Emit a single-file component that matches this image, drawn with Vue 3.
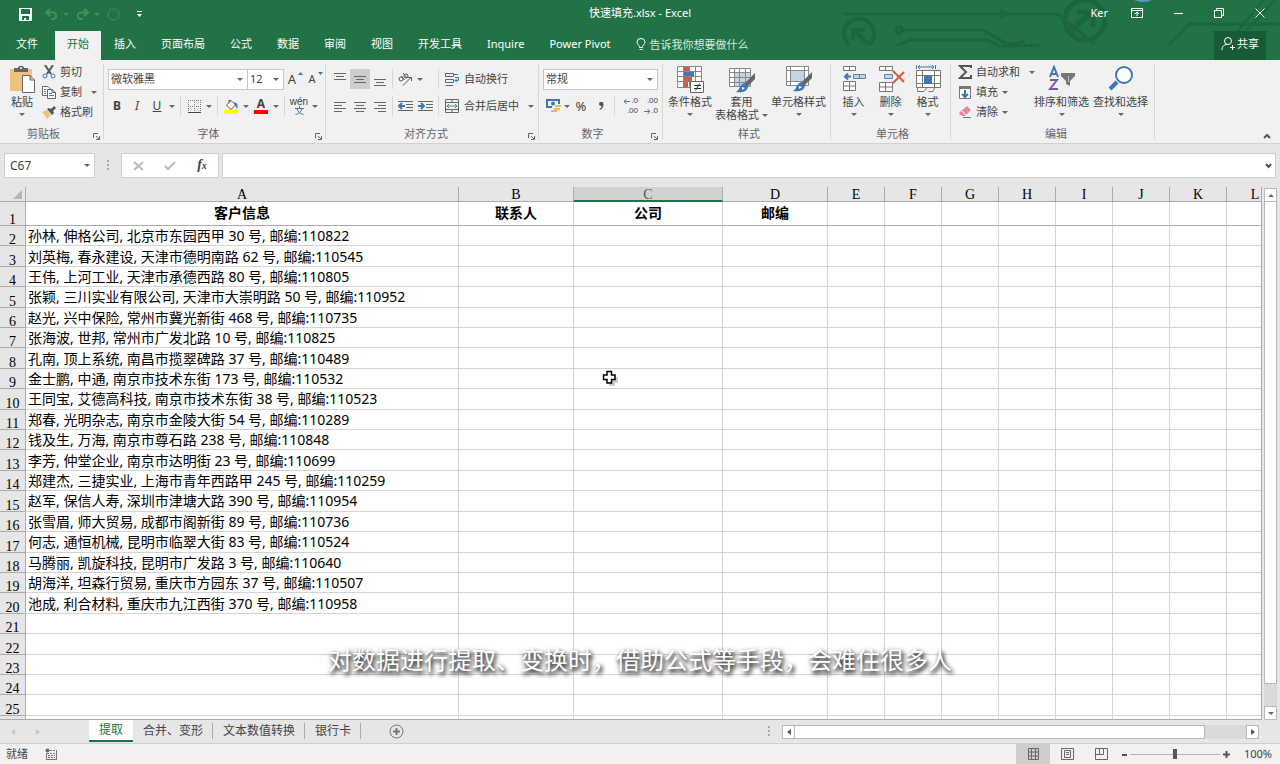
<script setup>
import { ref } from 'vue'

const tabs = ['文件', '开始', '插入', '页面布局', '公式', '数据', '审阅', '视图', '开发工具', 'Inquire', 'Power Pivot']
const columns = ['A', 'B', 'C', 'D', 'E', 'F', 'G', 'H', 'I', 'J', 'K', 'L']
const headings = ['客户信息', '联系人', '公司', '邮编']
const records = [
  '孙林, 伸格公司, 北京市东园西甲 30 号, 邮编:110822',
  '刘英梅, 春永建设, 天津市德明南路 62 号, 邮编:110545',
  '王伟, 上河工业, 天津市承德西路 80 号, 邮编:110805',
  '张颖, 三川实业有限公司, 天津市大崇明路 50 号, 邮编:110952',
  '赵光, 兴中保险, 常州市冀光新街 468 号, 邮编:110735',
  '张海波, 世邦, 常州市广发北路 10 号, 邮编:110825',
  '孔南, 顶上系统, 南昌市揽翠碑路 37 号, 邮编:110489',
  '金士鹏, 中通, 南京市技术东街 173 号, 邮编:110532',
  '王同宝, 艾德高科技, 南京市技术东街 38 号, 邮编:110523',
  '郑春, 光明杂志, 南京市金陵大街 54 号, 邮编:110289',
  '钱及生, 万海, 南京市尊石路 238 号, 邮编:110848',
  '李芳, 仲堂企业, 南京市达明街 23 号, 邮编:110699',
  '郑建杰, 三捷实业, 上海市青年西路甲 245 号, 邮编:110259',
  '赵军, 保信人寿, 深圳市津塘大路 390 号, 邮编:110954',
  '张雪眉, 师大贸易, 成都市阁新街 89 号, 邮编:110736',
  '何志, 通恒机械, 昆明市临翠大街 83 号, 邮编:110524',
  '马腾丽, 凯旋科技, 昆明市广发路 3 号, 邮编:110640',
  '胡海洋, 坦森行贸易, 重庆市方园东 37 号, 邮编:110507',
  '池成, 利合材料, 重庆市九江西街 370 号, 邮编:110958',
]
const rows = Array.from({ length: 24 }, (_, i) => ({ number: i + 2, text: records[i] ?? '' }))
const sheets = ['提取', '合并、变形', '文本数值转换', '银行卡']

const cellName = ref('C67')
const formula = ref('')
const zoom = ref(50)
const activeSheet = ref('提取')

// Line ends of each alignment glyph, as [x1, x2, y].
const vAligns = [
  { name: '顶端对齐', lines: [[1, 13, 1], [3, 11, 4], [1, 13, 7]] },
  { name: '垂直居中', lines: [[1, 13, 4], [3, 11, 7], [1, 13, 10]] },
  { name: '底端对齐', lines: [[1, 13, 7], [3, 11, 10], [1, 13, 13]] },
]
const hAligns = [
  { name: '左对齐', lines: [[1, 13, 2], [1, 9, 5], [1, 13, 8], [1, 9, 11]] },
  { name: '居中', lines: [[1, 13, 2], [3, 11, 5], [1, 13, 8], [3, 11, 11]] },
  { name: '右对齐', lines: [[1, 13, 2], [5, 13, 5], [1, 13, 8], [5, 13, 11]] },
]
</script>

<template>
  <div class="app">
    <header class="top">
      <svg class="circuit" viewBox="0 0 445 60" width="445" height="60" fill="none" stroke="#1a6238" stroke-width="3" aria-hidden="true">
        <path d="M8 14H190L222 14L260 44" />
        <path d="M66 30H148L172 44H178L190 41" />
        <path d="M62 45L76 40H152L165 46H182L205 45" />
        <circle cx="64" cy="30" r="3" />
        <path d="M165 10L172 14L165 18" stroke-width="2" />
        <path d="M14 45A15 15 0 1 1 34 45" stroke-width="4" />
        <path d="M18 40V30H30M19 31L33 44" stroke-width="4" />
        <circle cx="250" cy="20" r="20" stroke-width="5" />
        <path d="M236 30L256 13M242 12H258V27" stroke-width="5" />
        <path d="M334 45L354 24H445" />
        <path d="M402 32L428 0M412 30L440 0" stroke-width="2" />
        <ellipse cx="308" cy="-2" rx="10" ry="4" fill="#5fa8e6" stroke="none" />
      </svg>
      <div class="title-row">
        <div class="quick">
          <button class="qbtn save" aria-label="保存">
            <svg width="13" height="13" viewBox="0 0 13 13"><path fill="#fff" fill-rule="evenodd" d="M0 0H13V13H0ZM2 1V6H11V1ZM3 8V12H5V10H7V12H10V8Z" /></svg>
          </button>
          <button class="qbtn" aria-label="撤消">
            <svg width="13" height="12" viewBox="0 0 13 12" fill="none" stroke="#43905f" stroke-width="2"><path d="M5 1L1 4.5L5 8M1 4.5H8A3 3 0 0 1 8 11H6" /></svg>
          </button>
          <span class="caret faint"></span>
          <button class="qbtn" aria-label="恢复">
            <svg width="13" height="12" viewBox="0 0 13 12" fill="none" stroke="#43905f" stroke-width="2"><path d="M8 1L12 4.5L8 8M12 4.5H5A3 3 0 0 0 5 11H7" /></svg>
          </button>
          <span class="caret faint"></span>
          <button class="qbtn" aria-label="触摸模式">
            <svg width="13" height="13" viewBox="0 0 13 13" fill="none" stroke="#43905f"><circle cx="6.500" cy="6.500" r="5.500" /></svg>
          </button>
          <button class="qbtn" aria-label="自定义快速访问工具栏">
            <svg width="7" height="8" viewBox="0 0 7 8"><path fill="#fff" d="M1 1H6V2H1ZM1 4H6L3.500 7Z" /></svg>
          </button>
        </div>
        <h1>快速填充.xlsx - Excel</h1>
        <div class="window">
          <span class="user">Ker</span>
          <button aria-label="功能区显示选项"><svg width="12" height="10" viewBox="0 0 12 10" fill="none" stroke="#fff"><path d="M.5.5H11.500V9.500H.5ZM.5 2.500H11.500M6 8V4M4 6L6 4L8 6" /></svg></button>
          <button aria-label="最小化"><svg width="10" height="10" viewBox="0 0 10 10" stroke="#fff"><path d="M1 5.500H10" /></svg></button>
          <button aria-label="还原"><svg width="10" height="10" viewBox="0 0 10 10" fill="none" stroke="#fff"><path d="M.5 2.500H7.500V9.500H.5ZM2.500 2V.5H9.500V7.500H8" /></svg></button>
          <button aria-label="关闭"><svg width="10" height="10" viewBox="0 0 10 10" stroke="#fff"><path d="M.5.5L9.500 9.500M9.500.5L.5 9.500" /></svg></button>
        </div>
      </div>
      <nav class="tabs">
        <button v-for="t in tabs" :key="t" :class="{ active: t === '开始', file: t === '文件' }">{{ t }}</button>
        <button class="tell">
          <svg width="10" height="13" viewBox="0 0 10 13" fill="none" stroke="#fff"><path d="M3.500 9.500V8.500C3 7 1 6 1 4A4 3.500 0 0 1 9 4C9 6 7 7 6.500 8.500V9.500ZM3.500 11.500H6.500" /></svg>
          告诉我你想要做什么
        </button>
        <button class="share">
          <svg width="14" height="15" viewBox="0 0 14 15" fill="none" stroke="#fff"><circle cx="7" cy="5" r="3.500" /><path d="M1 14C1 10 3.500 8.500 6 8.500M9 11.500H14M11.500 9V14" /></svg>
          共享
        </button>
      </nav>
    </header>

    <section class="ribbon">
      <div class="group clipboard">
        <div class="body">
          <button class="big paste">
            <svg width="28" height="28" viewBox="0 0 28 28"><path fill="#ecc37e" d="M2 4H24V26H2Z" /><path fill="#666" d="M6 3H10C10 0 16 0 16 3H20V7H6Z" /><circle cx="13" cy="3" r="1" fill="#fff" /><path fill="#fff" stroke="#666" d="M14.500 10.500H22L26.500 15V27.500H14.500ZM22 10.500V15H26.500" /></svg>
            <span>粘贴</span><span class="caret"></span>
          </button>
          <div class="stack">
            <button class="small">
              <svg width="14" height="14" viewBox="0 0 14 14" fill="none"><path stroke="#555" stroke-width="2" d="M3 0L9 9M11 0L5 9" /><circle cx="3" cy="11" r="2" stroke="#3f77b8" /><circle cx="11" cy="11" r="2" stroke="#3f77b8" /></svg>剪切
            </button>
            <button class="small">
              <svg width="14" height="14" viewBox="0 0 14 14" fill="#fff" stroke="#666"><path d="M.5 1.500H6L8.500 4V10.500H.5Z" /><path d="M5.500 4.500H10L13.500 7.500V13.500H5.500ZM10 4.500V7.500H13.500" /><path stroke="#4b7cac" d="M2 4.500H4M2 6.500H4M2 8.500H4M7 8.500H10M7 10.500H12" /></svg>复制<span class="caret push"></span>
            </button>
            <button class="small">
              <svg width="14" height="14" viewBox="0 0 14 14"><path fill="#ecc37e" d="M0 7L5 5L9 10L5 14Z" /><path fill="#555" d="M5 4L7 3L9 4L12 1L14 3L11 6L12 8L10 10Z" /></svg>格式刷
            </button>
          </div>
        </div>
        <footer class="has-launch">剪贴板<button class="launch" aria-label="剪贴板选项"><svg width="7" height="7" viewBox="0 0 7 7" fill="none" stroke="#666"><path d="M.5 5V.5H5M3 3L6 6M6.500 3V6.500H3" /></svg></button></footer>
      </div>

      <div class="group font">
        <div class="body rows">
          <div class="line">
            <label class="combo family"><select aria-label="字体"><option>微软雅黑</option></select><span class="caret"></span></label>
            <label class="combo size"><select aria-label="字号"><option>12</option></select><span class="caret"></span></label>
            <button class="tool letter">A<svg class="tri" width="5" height="3" viewBox="0 0 5 3"><path fill="#3f77b8" d="M0 3L2.500 0L5 3Z" /></svg></button>
            <button class="tool letter less">A<svg class="tri" width="5" height="3" viewBox="0 0 5 3"><path fill="#3f77b8" d="M0 0H5L2.500 3Z" /></svg></button>
          </div>
          <div class="line format">
            <button class="tool"><b>B</b></button>
            <button class="tool"><i>I</i></button>
            <button class="tool"><u>U</u></button>
            <button class="drop" aria-label="下划线类型"><span class="caret"></span></button>
            <span class="sep"></span>
            <button class="tool" aria-label="边框"><svg width="13" height="13" viewBox="0 0 13 13" fill="none" stroke="#777"><path stroke-dasharray="1 1" d="M0 .5H13M.5 0V12M12.500 0V12M6.500 0V12M0 6.500H13" /><path stroke="#444" d="M0 12.500H13" /></svg></button>
            <button class="drop" aria-label="更多边框"><span class="caret"></span></button>
            <span class="sep"></span>
            <button class="tool" aria-label="填充颜色"><svg width="15" height="15" viewBox="0 0 15 15"><path fill="#fff" stroke="#555" d="M2.500 6L7 1.500L11.500 6L7 10.500ZM5 4V1.500H7" /><path fill="#3f77b8" d="M10 3C14 4 14 7 13 10L11 6Z" /><path fill="#ff0" d="M0 11H14V15H0Z" /></svg></button>
            <button class="drop" aria-label="更多填充颜色"><span class="caret"></span></button>
            <button class="tool color" aria-label="字体颜色">A</button>
            <button class="drop" aria-label="更多字体颜色"><span class="caret"></span></button>
            <span class="sep"></span>
            <button class="tool pinyin"><span>wén</span><svg width="9" height="9" viewBox="0 0 9 9" fill="none" stroke="#3f77b8"><path d="M4.500 0V2M0 2.500H9M2 3C3 6 5 7.500 8.500 8.500M7 3C6 6 4 7.500.5 8.500" /></svg></button>
            <button class="drop" aria-label="拼音选项"><span class="caret"></span></button>
          </div>
        </div>
        <footer class="has-launch">字体<button class="launch" aria-label="字体选项"><svg width="7" height="7" viewBox="0 0 7 7" fill="none" stroke="#666"><path d="M.5 5V.5H5M3 3L6 6M6.500 3V6.500H3" /></svg></button></footer>
      </div>

      <div class="group align">
        <div class="body rows">
          <div class="line">
            <button v-for="(a, i) in vAligns" :key="a.name" class="tool" :class="{ on: i === 1 }" :aria-label="a.name">
              <svg width="14" height="15" viewBox="0 0 14 15" fill="#666"><rect v-for="l in a.lines" :key="l[2]" :x="l[0]" :y="l[2]" :width="l[1] - l[0]" height="1" /></svg>
            </button>
            <span class="sep"></span>
            <button class="tool" aria-label="方向"><svg width="16" height="16" viewBox="0 0 16 16" fill="none" stroke="#555"><circle cx="4" cy="8" r="2" /><path d="M4.500 5L7.500 9M6 2L10 7" /><circle cx="9" cy="5" r="2" /><path d="M6 14.500L14 6.500M11 6.500H14.500V10" /></svg></button>
            <button class="drop" aria-label="更多方向"><span class="caret"></span></button>
            <span class="sep wide"></span>
            <button class="small">
              <svg width="15" height="15" viewBox="0 0 15 15" fill="none" stroke="#666"><path d="M.5 1.500H8.500V4.500H.5ZM.5 7.500H8.500V10.500H.5ZM.5 13.500H8" /><path stroke="#3f77b8" d="M9 2.500H13M10 5.500H13.500V8.500H10M12 6.500L10 8.500L12 10.500" /></svg>自动换行
            </button>
          </div>
          <div class="line">
            <button v-for="a in hAligns" :key="a.name" class="tool" :aria-label="a.name">
              <svg width="14" height="13" viewBox="0 0 14 13" fill="#666"><rect v-for="l in a.lines" :key="l[2]" :x="l[0]" :y="l[2]" :width="l[1] - l[0]" height="1" /></svg>
            </button>
            <span class="sep"></span>
            <button class="tool" aria-label="减少缩进量"><svg width="15" height="13" viewBox="0 0 15 13" fill="none" stroke="#666"><path d="M0 1.500H15M8 4.500H15M8 7.500H15M0 10.500H15" /><path stroke="#3f77b8" stroke-width="2" d="M1 6H7M4 3L1 6L4 9" /></svg></button>
            <button class="tool" aria-label="增加缩进量"><svg width="15" height="13" viewBox="0 0 15 13" fill="none" stroke="#666"><path d="M0 1.500H15M8 4.500H15M8 7.500H15M0 10.500H15" /><path stroke="#3f77b8" stroke-width="2" d="M0 6H6M3 3L6 6L3 9" /></svg></button>
            <span class="sep merge-sep"></span>
            <button class="small merge">
              <svg width="15" height="14" viewBox="0 0 15 14" fill="none" stroke="#666"><path d="M.5.5H13.500V13.500H.5ZM.5 3.500H13.500M.5 10.500H13.500M7 .5V3.500M7 10.500V13.500" /><path stroke="#4b8a7a" d="M2 7H12M4 5L2 7L4 9M10 5L12 7L10 9" /></svg>合并后居中<span class="caret push"></span>
            </button>
          </div>
        </div>
        <footer class="has-launch">对齐方式<button class="launch" aria-label="对齐选项"><svg width="7" height="7" viewBox="0 0 7 7" fill="none" stroke="#666"><path d="M.5 5V.5H5M3 3L6 6M6.500 3V6.500H3" /></svg></button></footer>
      </div>

      <div class="group number">
        <div class="body rows">
          <div class="line">
            <label class="combo grow"><select aria-label="数字格式"><option>常规</option></select><span class="caret"></span></label>
          </div>
          <div class="line">
            <button class="tool" aria-label="会计数字格式"><svg width="15" height="14" viewBox="0 0 15 14" fill="none"><path stroke="#3f77b8" stroke-width="2" d="M6 8H1V1H13V5" /><circle cx="7" cy="4.500" r="2" fill="#3f77b8" /><path fill="#edb763" d="M9 6H15V8H9ZM8 9H14V11H8ZM5 11H11V13H5Z" /></svg></button>
            <button class="drop" aria-label="更多货币格式"><span class="caret"></span></button>
            <button class="tool pct">%</button>
            <button class="tool comma" aria-label="千位分隔样式"><svg width="5" height="9" viewBox="0 0 5 9"><path fill="#555" d="M0 2A2.200 2.200 0 0 1 4.500 2C4.500 5 3 7 1 8L.5 7C2 6 2.500 5 2.500 4C1 4 0 3 0 2Z" /></svg></button>
            <span class="sep"></span>
            <button class="tool decimal" aria-label="增加小数位数"><span><svg width="6" height="5" viewBox="0 0 6 5" fill="none" stroke="#3f77b8"><path d="M0 2.500H6M2.500 0L0 2.500L2.500 5" /></svg>.0</span><span>.00</span></button>
            <button class="tool decimal" aria-label="减少小数位数"><span>.00</span><span><svg width="6" height="5" viewBox="0 0 6 5" fill="none" stroke="#3f77b8"><path d="M0 2.500H6M3.500 0L6 2.500L3.500 5" /></svg>.0</span></button>
          </div>
        </div>
        <footer class="has-launch">数字<button class="launch" aria-label="数字选项"><svg width="7" height="7" viewBox="0 0 7 7" fill="none" stroke="#666"><path d="M.5 5V.5H5M3 3L6 6M6.500 3V6.500H3" /></svg></button></footer>
      </div>

      <div class="group styles">
        <div class="body">
          <button class="big">
            <svg width="28" height="28" viewBox="0 0 28 28"><path fill="#fff" stroke="#888" d="M1.500 1.500H25.500V22.500H1.500ZM1.500 6.500H25.500M1.500 11.500H25.500M1.500 16.500H25.500M7.500 1.500V22.500M13.500 1.500V22.500M19.500 1.500V22.500" /><path fill="#d65a3c" d="M8 2H13V6H8ZM8 12H16V16H8ZM8 17H12V22H8Z" /><path fill="#3f77b8" d="M8 7H18V11H8Z" /><path fill="#fff" stroke="#666" d="M14.500 16.500H27.500V27.500H14.500Z" /><path stroke="#333" fill="none" d="M18 20.500H25M18 23.500H25M23.500 18.500L19.500 25.500" /></svg>
            <span>条件格式</span><span class="caret"></span>
          </button>
          <button class="big two">
            <svg width="28" height="28" viewBox="0 0 28 28"><path fill="#fff" stroke="#888" d="M1.500 3.500H22.500V21.500H1.500Z" /><path fill="#c5d3e4" d="M7 8H22V21H7Z" /><path stroke="#888" fill="none" d="M1.500 7.500H22.500M1.500 12.500H22.500M1.500 17.500H22.500M6.500 3.500V21.500M11.500 3.500V21.500M17.500 3.500V21.500" /><path fill="#666" d="M27 8V14L19 22L16 19Z" /><path fill="#3f77b8" d="M16 18L20 22C19 27 13 28 8 27C12 25 11 20 16 18Z" /><path fill="#fff" d="M14 22L17 23L14 25Z" /></svg>
            <span>套用</span><span class="inline">表格格式<i class="caret"></i></span>
          </button>
          <button class="big">
            <svg width="28" height="28" viewBox="0 0 28 28"><path fill="#fff" stroke="#888" d="M1.500 1.500H23.500V20.500H1.500ZM1.500 5.500H23.500M1.500 16.500H23.500M5.500 1.500V20.500M19.500 1.500V20.500" /><path fill="#c5d3e4" d="M6 6H19V16H6Z" /><path fill="#666" d="M27 7V13L19 21L16 18Z" /><path fill="#3f77b8" d="M16 17L20 21C19 26 13 27 8 26C12 24 11 19 16 17Z" /><path fill="#fff" d="M14 21L17 22L14 24Z" /></svg>
            <span>单元格样式</span><span class="caret"></span>
          </button>
        </div>
        <footer>样式</footer>
      </div>

      <div class="group cells">
        <div class="body">
          <button class="big">
            <svg width="28" height="28" viewBox="0 0 28 28" stroke="#777" fill="#fff"><path d="M3.500 1.500H15.500V5.500H3.500ZM9.500 1.500V5.500" /><path fill="#c5d3e4" stroke="#5a82ad" d="M13.500 9.500H25.500V13.500H13.500ZM19.500 9.500V13.500" /><path d="M3.500 16.500H15.500V25.500H3.500ZM9.500 16.500V25.500M3.500 21H15.500" /><path fill="none" stroke="#3f77b8" stroke-width="2" d="M5 11.500H11M8 8.500L5 11.500L8 14.500" /></svg>
            <span>插入</span><span class="caret"></span>
          </button>
          <button class="big">
            <svg width="28" height="28" viewBox="0 0 28 28" stroke="#777" fill="#fff"><path d="M2.500 1.500H15.500V5.500H2.500ZM8.500 1.500V5.500" /><path fill="#c5d3e4" stroke="#5a82ad" d="M7.500 9.500H15.500V13.500H7.500Z" /><path d="M2.500 17.500H15.500V26.500H2.500ZM8.500 17.500V26.500M2.500 22H15.500" /><path fill="none" stroke="#d65a3c" stroke-width="2" d="M16 6L27 17M27 7L16 18" /></svg>
            <span>删除</span><span class="caret"></span>
          </button>
          <button class="big">
            <svg width="28" height="28" viewBox="0 0 28 28" stroke="#777" fill="#fff"><path d="M2.500 5.500H26.500V22.500H2.500ZM8.500 5.500V22.500M20.500 5.500V22.500M2.500 10.500H26.500M2.500 18.500H26.500M3.500 22.500V26.500H10L12.500 23M14.500 26.500H19L20.500 23" /><path fill="#3f77b8" stroke="none" d="M10 11H18V19H10Z" /><path fill="none" stroke="#3f77b8" d="M2.500 0V4M21.500 0V4M4 2H20M6 0L4 2L6 4M18 0L20 2L18 4" /></svg>
            <span>格式</span><span class="caret"></span>
          </button>
        </div>
        <footer>单元格</footer>
      </div>

      <div class="group edit">
        <div class="body">
          <div class="stack">
            <button class="small"><svg width="14" height="14" viewBox="0 0 14 14" fill="none" stroke="#555" stroke-width="2"><path d="M13 3V1H2L8 7L2 13H13V10" /></svg>自动求和<span class="caret push"></span></button>
            <button class="small"><svg width="14" height="14" viewBox="0 0 14 14"><path fill="#fff" stroke="#777" d="M1.500 1.500H12.500V13.500H1.500Z" /><path fill="#777" d="M1 1H13V4H1Z" /><path fill="none" stroke="#3f77b8" stroke-width="2" d="M7 5V12M4 9L7 12L10 9" /></svg>填充<span class="caret near"></span></button>
            <button class="small"><svg width="14" height="14" viewBox="0 0 14 14"><path fill="#e487a5" d="M2 7L9 1L13 5L7 11H4L1 9Z" /><path stroke="#fff" d="M4 6L8 10" /><path stroke="#777" d="M5 12.500H13" /></svg>清除<span class="caret near"></span></button>
          </div>
          <button class="big">
            <svg width="28" height="28" viewBox="0 0 28 28" fill="none"><path stroke="#3f77b8" stroke-width="2" d="M2 12L6 2L10 12M3 9H9" /><path stroke="#8a4fb0" stroke-width="2" d="M2 15H9L2 24H10" /><path fill="#777" d="M13 8H27V11L22 16V21L18 19V16L13 11Z" /><path stroke="#bbb" d="M20.500 11V17" /></svg>
            <span>排序和筛选</span><span class="caret"></span>
          </button>
          <button class="big">
            <svg width="28" height="28" viewBox="0 0 28 28" fill="none" stroke="#3f77b8"><path stroke-width="4" d="M3 24L10 17" /><circle cx="17" cy="10" r="8" stroke-width="2" fill="#fff" /></svg>
            <span>查找和选择</span><span class="caret"></span>
          </button>
        </div>
        <footer>编辑</footer>
      </div>
      <button class="collapse" aria-label="折叠功能区"><svg width="8" height="6" viewBox="0 0 8 6" fill="none" stroke="#555" stroke-width="2"><path d="M1 5L4 2L7 5" /></svg></button>
    </section>

    <section class="formula">
      <div class="namebox"><input v-model="cellName" aria-label="名称框"><span class="caret"></span></div>
      <span class="dots"></span>
      <div class="fxbox">
        <button aria-label="取消"><svg width="11" height="10" viewBox="0 0 11 10" stroke="#bbb" stroke-width="2"><path d="M1 1L10 9M10 1L1 9" /></svg></button>
        <button aria-label="输入"><svg width="12" height="10" viewBox="0 0 12 10" fill="none" stroke="#bbb" stroke-width="2"><path d="M1 5L4 8L11 1" /></svg></button>
        <button class="fx"><i>f<small>x</small></i></button>
      </div>
      <div class="entry"><input v-model="formula" aria-label="编辑栏"><svg width="7" height="6" viewBox="0 0 7 6" fill="none" stroke="#555" stroke-width="2"><path d="M1 1L3.500 4L6 1" /></svg></div>
    </section>

    <main class="work">
      <div class="sheet">
        <table>
          <colgroup><col class="c-num"><col class="c-a"><col class="c-b"><col class="c-c"><col class="c-d"><col v-for="n in 8" :key="n" class="c-x"></colgroup>
          <thead>
            <tr>
              <td class="corner"><svg width="9" height="9" viewBox="0 0 9 9"><path fill="#b4b4b4" d="M9 0V9H0Z" /></svg></td>
              <th v-for="c in columns" :key="c" scope="col" :class="{ current: c === 'C' }">{{ c }}</th>
            </tr>
          </thead>
          <tbody>
            <tr class="first">
              <th scope="row">1</th>
              <td v-for="(c, i) in columns" :key="c">{{ headings[i] }}</td>
            </tr>
            <tr v-for="r in rows" :key="r.number" class="data">
              <th scope="row">{{ r.number }}</th>
              <td v-for="(c, i) in columns" :key="c">{{ i === 0 ? r.text : '' }}</td>
            </tr>
            <tr class="rest"><th></th><td v-for="c in columns" :key="c"></td></tr>
          </tbody>
        </table>
        <svg class="pointer" width="18" height="18" viewBox="0 0 18 18"><path fill="#999" opacity=".5" d="M7 4H12V7H16V13H13V16H7V12H4V7H7Z" /><path fill="#fff" stroke="#000" stroke-width="1.500" d="M5 1.500H9.500V5H13V9.500H9.500V13H5V9.500H1.500V5H5Z" /></svg>
      </div>
      <div class="vscroll">
        <button aria-label="向上滚动"><span class="caret up"></span></button>
        <div class="thumb"></div>
        <div class="track"></div>
        <button aria-label="向下滚动"><span class="caret"></span></button>
      </div>
    </main>

    <section class="sheetbar">
      <button class="arrow" aria-label="上一个工作表"><svg width="4" height="6" viewBox="0 0 4 6"><path fill="#c4c4c4" d="M4 0V6L0 3Z" /></svg></button>
      <button class="arrow" aria-label="下一个工作表"><svg width="4" height="6" viewBox="0 0 4 6"><path fill="#c4c4c4" d="M0 0V6L4 3Z" /></svg></button>
      <div class="sheets">
        <button v-for="s in sheets" :key="s" :class="{ active: s === activeSheet }" @click="activeSheet = s">{{ s }}</button>
      </div>
      <button class="add" aria-label="新工作表"><svg width="15" height="15" viewBox="0 0 15 15" fill="none" stroke="#777"><circle cx="7.500" cy="7.500" r="6.500" /><path stroke-width="2" d="M4 7.500H11M7.500 4V11" /></svg></button>
      <span class="dots"></span>
      <div class="hscroll">
        <button aria-label="向左滚动"><svg width="4" height="6" viewBox="0 0 4 6"><path fill="#555" d="M4 0V6L0 3Z" /></svg></button>
        <div class="thumb"></div>
        <div class="track"></div>
        <button aria-label="向右滚动"><svg width="4" height="6" viewBox="0 0 4 6"><path fill="#555" d="M0 0V6L4 3Z" /></svg></button>
      </div>
    </section>

    <footer class="status">
      <span>就绪</span>
      <button class="macro" aria-label="录制宏"><svg width="12" height="12" viewBox="0 0 12 12" fill="none" stroke="#777"><path d="M5 2.500H11.500V11.500H1.500V5M2 5.500H11M3 7.500H10M3 9.500H10" stroke-dasharray="2 1" /><path d="M11.500 2V11.500H1.500V5" /><circle cx="2.500" cy="2.500" r="2" fill="#666" stroke="none" /></svg></button>
      <div class="views">
        <button class="on" aria-label="普通"><svg width="13" height="12" viewBox="0 0 13 12" fill="none" stroke="#666"><path d="M1.500.5H11.500V11.500H1.500ZM1.500 4H11.500M1.500 8H11.500M4.500.5V11.500M8.500.5V11.500" /></svg></button>
        <button aria-label="页面布局"><svg width="13" height="12" viewBox="0 0 13 12" fill="none" stroke="#666"><path d="M.5.5H12.500V11.500H.5ZM3.500 2.500H9.500V9.500H3.500ZM5 4.500H8M5 6.500H8" /></svg></button>
        <button aria-label="分页预览"><svg width="13" height="12" viewBox="0 0 13 12" fill="none" stroke="#666"><path d="M.5.5H12.500V11.500H.5ZM4.500.5V6.500M8.500.5V6.500H.5" /></svg></button>
      </div>
      <button class="sign" aria-label="缩小"><svg width="7" height="7" viewBox="0 0 7 7" stroke="#555" stroke-width="2"><path d="M1 4H6" /></svg></button>
      <input v-model="zoom" type="range" min="0" max="100" aria-label="缩放">
      <button class="sign" aria-label="放大"><svg width="7" height="7" viewBox="0 0 7 7" stroke="#555" stroke-width="2"><path d="M0 3.500H7M3.500 0V7" /></svg></button>
      <span class="percent">100%</span>
    </footer>

    <p class="caption">对数据进行提取、变换时，借助公式等手段，会难住很多人</p>
  </div>
</template>

<style>
html, body { margin: 0; height: 100%; }
</style>

<style scoped>
.app { position: relative; display: flex; flex-direction: column; height: 100vh; min-height: 480px; overflow: hidden; background: #e6e6e6; color: #444; font: 11px/16px "Noto Sans", "Noto Sans CJK SC", sans-serif; }
.app * { box-sizing: border-box; }
button { display: flex; align-items: center; justify-content: center; margin: 0; padding: 0; border: 0; background: none; color: inherit; font: inherit; white-space: nowrap; }
input, select { margin: 0; border: 0; outline: 0; background: none; color: inherit; font: inherit; }
svg { display: block; flex: none; }
.caret { flex: none; width: 0; height: 0; border: 3px solid transparent; border-top-color: #666; border-bottom: 0; }
.caret.up { border-top: 0; border-bottom: 3px solid #666; }
.caret.faint { border-top-color: #43905f; }

.top { position: relative; flex: none; background: #217346; color: #fff; }
.circuit { position: absolute; top: 0; right: 0; opacity: .75; }
.title-row { position: relative; display: grid; grid-template-columns: 1fr auto 1fr; align-items: center; height: 26px; }
.quick { display: flex; align-items: center; padding-left: 14px; }
.qbtn { width: 22px; height: 24px; padding-top: 2px; }
.save { margin-right: 4px; }
.quick .caret { margin: 2px 2px 0 1px; }
.quick .qbtn:last-child { margin-left: 4px; }
h1 { margin: 0; font-size: 11px; font-weight: 400; line-height: 16px; }
.window { display: flex; justify-content: flex-end; align-items: center; }
.window button { width: 41px; height: 26px; }
.user { padding: 0 8px; }
.tabs { position: relative; display: flex; gap: 1px; height: 34px; padding-top: 5px; }
.tabs button { padding: 0 12px 4px; }
.tabs .file { padding: 0 16px 4px; }
.tabs .active { background: #f1f1f1; color: #217346; }
.tabs .tell { gap: 4px; padding: 0 10px 2px 12px; color: #d8eadf; }
.tabs .share { gap: 2px; margin-left: auto; margin-right: 14px; width: 52px; padding: 0 0 4px; background: #185c37; }

.ribbon { display: flex; flex: none; height: 84px; padding-top: 2px; background: #f1f1f1; border-bottom: 1px solid #d2d2d2; }
.group { display: flex; flex-direction: column; flex: none; margin: 2px 0 4px; border-right: 1px solid #d6d6d6; }
.body { display: flex; flex: 1; }
.group footer { position: relative; height: 16px; line-height: 22px; text-align: center; color: #666; }
.group .has-launch { padding-right: 16px; }
.launch { position: absolute; right: 3px; bottom: -2px; width: 8px; height: 10px; }
.number .launch { right: 0; }
.stack { display: flex; flex-direction: column; margin-top: -2px; }
.small { gap: 4px; height: 20px; justify-content: flex-start; }
.small .push { margin-left: 5px; }
.small .near { margin-left: 0; }
.big { flex-direction: column; justify-content: flex-start; line-height: 14px; padding-top: 1px; }
.big span:not(.caret) { height: 14px; margin-top: 2px; }
.big > .caret { margin-top: 4px; }
.big.two span:not(.caret) + .inline { margin-top: -1px; }
.inline { display: flex; align-items: center; gap: 3px; }
.clipboard { width: 104px; }
.clipboard .paste { width: 42px; padding-left: 2px; }
.rows { flex-direction: column; gap: 7px; padding-top: 5px; }
.line { display: flex; align-items: center; height: 20px; }
.font { width: 222px; padding-left: 4px; }
.combo { position: relative; display: flex; align-items: center; height: 21px; border: 1px solid #c6c6c6; background: #fff; }
.combo select { width: 100%; height: 19px; padding: 0 2px; appearance: none; }
.combo .caret { position: absolute; right: 4px; pointer-events: none; }
.family { width: 140px; }
.size { width: 36px; border-left: 0; }
.grow { flex: 1; }
.tool { position: relative; flex: none; width: 20px; height: 20px; font-size: 12px; }
.letter { font-size: 13px; padding-right: 4px; }
.less { font-size: 11px; }
.tri { position: absolute; top: 3px; right: 1px; }
.drop { width: 10px; height: 20px; }
.sep { flex: none; width: 1px; height: 20px; margin: 0 2px; background: #d6d6d6; }
.sep.wide { margin: 0 6px 0 13px; }
.sep.merge-sep { margin: 0 6px 0 3px; }
.format { margin-left: -1px; }
.format .sep { margin: 0 3px; }
.color { width: 14px; height: 16px; margin: 0 3px; border-bottom: 4px solid #f00; font-weight: 700; line-height: 12px; }
.pinyin { flex-direction: column; width: 22px; font: 10px/9px "Liberation Sans", "Noto Sans CJK SC", sans-serif; }
.align { width: 213px; padding-left: 4px; }
.on { background: #cdcdcd; }
.number { width: 124px; padding: 0 4px; }
.pct { font-size: 13px; }
.number .sep { margin: 0 3px; }
.decimal { flex-direction: column; align-items: flex-end; justify-content: center; font: 8px/10px "Liberation Sans", sans-serif; }
.decimal span { display: flex; align-items: center; gap: 1px; height: 10px; }
.styles { width: 168px; padding-left: 5px; }
.styles .body { gap: 3px; }
.cells { width: 120px; padding-left: 4px; }
.cells .big { width: 37px; }
.edit { width: 204px; padding-left: 7px; }
.edit .body { gap: 4px; }
.edit .stack { width: 72px; }
.collapse { align-self: flex-end; margin: 0 9px 4px auto; }

.formula { display: flex; flex: none; height: 43px; padding: 9px 4px 9px 4px; }
.formula > div { display: flex; align-items: center; background: #fff; border: 1px solid #cfcfcf; }
.namebox { width: 91px; padding-right: 4px; }
.namebox input { flex: 1; min-width: 0; padding-left: 5px; font-size: 12px; }
.dots { flex: none; align-self: center; width: 2px; height: 11px; margin: 0 12px; background: repeating-linear-gradient(#aaa 0 2px, transparent 2px 4px); }
.fxbox { width: 98px; }
.fxbox button { width: 32px; height: 23px; }
.fx { font: 700 14px/16px "Liberation Serif", serif; }
.fx small { font-size: 10px; }
.formula .entry { flex: 1; margin-left: 3px; padding-right: 3px; }
.entry input { flex: 1; min-width: 0; height: 22px; }

.work { display: flex; flex: 1; min-height: 0; }
.sheet { position: relative; flex: 1; min-width: 0; overflow: hidden; border-right: 1px solid #ababab; border-bottom: 1px solid #ababab; background: #fff; }
table { width: 1283px; height: 100%; table-layout: fixed; border-collapse: separate; border-spacing: 0; color: #000; }
.c-num { width: 26px; }
.c-a { width: 433px; }
.c-b { width: 115px; }
.c-c { width: 149px; }
.c-d { width: 105px; }
.c-x { width: 57px; }
th, td { padding: 0; border-right: 1px solid #d4d4d4; border-bottom: 1px solid #d4d4d4; white-space: nowrap; }
thead tr { height: 15px; }
thead th, .corner { height: 15px; background: #e6e6e6; border-color: #ababab; font: 14px/12px "Liberation Serif", serif; vertical-align: bottom; }
thead th.current { background: #d2d2d2; color: #555; border-bottom: 2px solid #217346; line-height: 10px; }
.corner svg { margin: 0 3px 2px auto; }
tbody th { background: #e6e6e6; border-color: #ababab; font: 14px/11px "Liberation Serif", serif; vertical-align: bottom; }
.first { height: 24px; }
.first td { height: 24px; padding-bottom: 2px; border-bottom-color: #ababab; font-size: 14px; line-height: 20px; font-weight: 700; text-align: center; }
.data td { padding-left: 2px; font-size: 14px; line-height: 19px; }
.data td:nth-child(n+3) { padding: 0; }
.data th { padding-top: 8px; }
.rest, .rest th, .rest td { height: 3px; border-bottom: 0; }
.pointer { position: absolute; left: 602px; top: 183px; }
.vscroll { display: flex; flex-direction: column; flex: none; width: 13px; margin: 1px 3px 0 2px; }
.vscroll button, .hscroll button { flex: none; width: 13px; height: 14px; border: 1px solid #b8b8b8; background: #fff; }
.vscroll .thumb { flex: 482; border: 1px solid #b8b8b8; border-top: 0; background: #fff; }
.vscroll .track { flex: 22; background: #dadada; }

.sheetbar { display: flex; align-items: center; flex: none; height: 24px; padding-right: 21px; border-bottom: 1px solid #cfcfcf; }
.arrow { width: 25px; height: 20px; }
.sheets { display: flex; align-self: stretch; margin-left: 39px; font-size: 12px; }
.sheets button { position: relative; padding: 0 10px 1px; }
.sheets button::after { content: ""; position: absolute; right: 0; top: 3px; height: 16px; border-right: 1px solid #ababab; }
.sheets .active { margin-bottom: 1px; border-bottom: 2px solid #217346; background: #fff; color: #217346; padding-bottom: 0; }
.sheets .active::after { display: none; }
.add { margin: 0 auto 0 28px; }
.hscroll { display: flex; flex: 0 1 477px; }
.hscroll .thumb { flex: 408; border: 1px solid #b8b8b8; border-left: 0; background: #fff; }
.hscroll .track { flex: 41; background: #dadada; }

.status { display: flex; align-items: center; flex: none; height: 20px; padding: 0 8px 0 6px; background: #f1f1f1; }
.macro { margin-left: 17px; }
.views { display: flex; margin-left: auto; }
.views button { width: 34px; height: 20px; }
.sign { width: 12px; height: 20px; }
.status input { width: 90px; height: 20px; appearance: none; background: linear-gradient(#b4b4b4, #b4b4b4) center / 100% 1px no-repeat; }
.status input::-webkit-slider-thumb { appearance: none; width: 4px; height: 10px; background: #555; }
.percent { width: 40px; text-align: right; }
.caption { position: absolute; left: 0; right: 0; bottom: 88px; margin: 0; padding: 0 16px; font-size: 24px; line-height: 32px; text-align: center; color: #fff; text-shadow: 2px 3px 4px #333, 1px 2px 5px #555; pointer-events: none; }
</style>
